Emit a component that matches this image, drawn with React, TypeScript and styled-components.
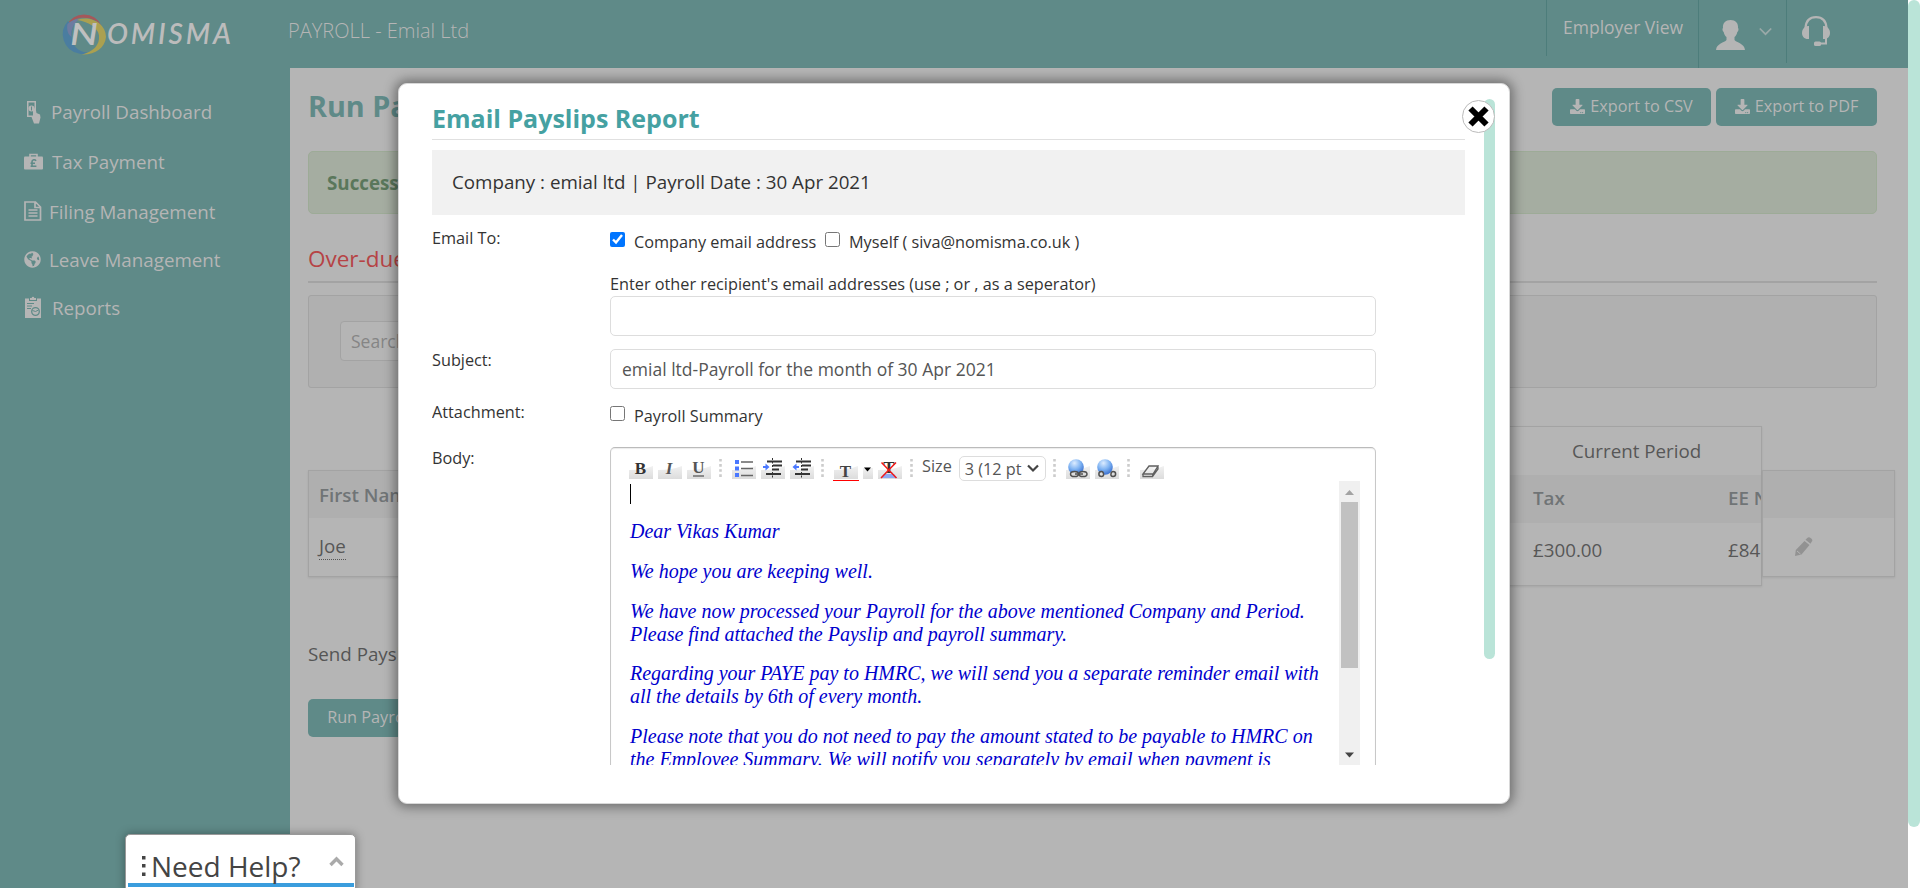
import React from "react";
import styled, { createGlobalStyle } from "styled-components";
import { FaDownload, FaGlobeAmericas } from "react-icons/fa";

const SANS = '"Open Sans", "Noto Sans", sans-serif';
const TEAL = "#5f8a88";
const DIM = "#b5b5b5";
const LINE = "#a3a3a3";

const Global = createGlobalStyle`
  * { box-sizing: border-box; }
  body { margin: 0; background: #fff; font-family: ${SANS}; overflow: hidden; }
  h1, h2, p { margin: 0; }
`;

const Page = styled.div`
  position: relative;
  width: 1920px;
  height: 888px;
  overflow: hidden;
  display: flex;
`;
const Screen = styled.div`
  width: 1908px;
  height: 888px;
  background: ${DIM};
  display: flex;
  flex-direction: column;
  overflow: hidden;
`;
const PageScroll = styled.div`
  width: 12px;
  height: 827px;
  border-radius: 6px;
  background: #bae4d8;
`;

const Header = styled.header`
  height: 68px;
  flex: none;
  background: ${TEAL};
  color: ${DIM};
  display: flex;
`;
const LogoBox = styled.div`
  width: 288px;
  padding: 6px 0 0 58px;
`;
const Product = styled.div`
  font-size: 20px;
  font-weight: 300;
  line-height: 27px;
  padding-top: 17px;
  flex: 1;
  white-space: nowrap;
`;
const HeaderCell = styled.div<{ w: number; h: number }>`
  width: ${(p) => p.w}px;
  height: ${(p) => p.h}px;
  border-left: 1px solid #4d7d7b;
  display: flex;
`;
const ViewName = styled.span`
  font-size: 17.5px;
  line-height: 24px;
  padding: 15px 0 0 16px;
  white-space: nowrap;
`;
const UserBox = styled.span`
  padding: 20px 0 0 17px;
  display: flex;
  gap: 14px;
`;
const HeadsetBox = styled.span`
  padding: 16px 0 0 15px;
`;

const Columns = styled.div`
  flex: 1;
  display: flex;
  min-height: 0;
`;
const Sidebar = styled.nav`
  width: 290px;
  flex: none;
  background: ${TEAL};
  padding-top: 19px;
`;
const NavItem = styled.a<{ gap: number; h: number }>`
  display: flex;
  align-items: center;
  height: ${(p) => p.h}px;
  padding-left: 24px;
  color: ${DIM};
  font-size: 18.75px;
  white-space: nowrap;
  svg { flex: none; margin-right: ${(p) => p.gap}px; }
`;

const Main = styled.main`
  flex: 1;
  padding-left: 18px;
  min-width: 0;
  color: #555;
`;
const Body = styled.div`
  width: 1569px;
`;
const TitleRow = styled.div`
  display: flex;
  height: 83px;
  padding-top: 20px;
  gap: 5px;
`;
const PageTitle = styled.h1`
  flex: 1;
  font-size: 28.75px;
  line-height: 36px;
  font-weight: 700;
  color: ${TEAL};
`;
const Button = styled.button<{ w: number }>`
  width: ${(p) => p.w}px;
  height: 38px;
  padding: 0 0 2px;
  border: 0;
  border-radius: 5px;
  background: ${TEAL};
  color: ${DIM};
  font: 400 16.25px ${SANS};
  display: flex;
  align-items: center;
  justify-content: center;
  gap: 5px;
  white-space: nowrap;
`;
const Alert = styled.div`
  height: 63px;
  border: 1px solid #9dab97;
  border-radius: 5px;
  background: #a5ada1;
  padding: 0 18px;
  line-height: 62px;
  font-size: 18.75px;
  font-weight: 700;
  color: #5a775b;
`;
const Overdue = styled.h2`
  height: 69px;
  border-bottom: 2px solid ${LINE};
  padding-top: 27px;
  font-size: 22.5px;
  line-height: 36px;
  font-weight: 400;
  color: #b64345;
`;
const SearchPanel = styled.div`
  margin-top: 12px;
  height: 93px;
  border: 1px solid ${LINE};
  border-radius: 3px;
  background: #b0b0b0;
  padding: 25px 31px;
`;
const SearchBox = styled.div`
  width: 300px;
  height: 40px;
  border: 1px solid ${LINE};
  border-radius: 4px;
  background: ${DIM};
  padding-left: 10px;
  line-height: 38px;
  font-size: 17.5px;
  color: #858585;
`;
const Tables = styled.div`
  margin-top: 38px;
  width: 1587px;
  display: flex;
  align-items: flex-start;
`;
const Table = styled.div<{ w: number; drop?: number }>`
  width: ${(p) => p.w}px;
  margin-top: ${(p) => p.drop || 0}px;
  border: 1px solid ${LINE};
  box-shadow: 0 1px 2px rgba(0, 0, 0, 0.08);
  overflow: hidden;
`;
const Row = styled.div<{ h: number; head?: boolean; pad: number; lift?: number }>`
  display: flex;
  align-items: center;
  height: ${(p) => p.h}px;
  padding-left: ${(p) => p.pad}px;
  padding-bottom: ${(p) => p.lift || 0}px;
  font-size: 18.75px;
  font-weight: ${(p) => (p.head ? 600 : 400)};
  color: ${(p) => (p.head ? "#707476" : "#575757")};
  background: ${(p) => (p.head ? "#afafaf" : "transparent")};
  white-space: nowrap;
`;
const Cell = styled.span<{ w?: number }>`
  flex: none;
  width: ${(p) => (p.w ? p.w + "px" : "auto")};
`;
const Editable = styled.span`
  border-bottom: 1px dotted #555;
  line-height: 26px;
  margin-top: -1px;
`;
const SendRow = styled.div`
  margin-top: 53px;
  font-size: 18.75px;
  line-height: 30px;
`;
const RunWrap = styled.div`
  margin-top: 30px;
`;

const Modal = styled.section`
  position: absolute;
  left: 398px;
  top: 83px;
  width: 1112px;
  height: 721px;
  border-radius: 9px;
  border: 1px solid #d8d8d8;
  background: #fff;
  box-shadow: 0 0 12px 3px rgba(0, 0, 0, 0.4);
  padding: 15px 14px 37px 33px;
  display: flex;
`;
const ModalBody = styled.div`
  width: 1033px;
  margin-right: 19px;
  height: 666px;
  overflow: hidden;
  color: #333;
`;
const ModalScroll = styled.div`
  width: 11px;
  height: 560px;
  border-radius: 6px;
  background: #bae4d8;
`;
const Close = styled.button`
  position: absolute;
  left: 1063px;
  top: 16px;
  width: 33px;
  height: 33px;
  padding: 0;
  border: 1.5px solid #bbb;
  border-radius: 50%;
  background: #fff;
  display: flex;
  align-items: center;
  justify-content: center;
`;
const ModalTitle = styled.h2`
  height: 41px;
  border-bottom: 1px solid #e0e0e0;
  font-size: 25px;
  line-height: 38px;
  font-weight: 700;
  color: #45a1a2;
`;
const Summary = styled.div`
  margin-top: 10px;
  height: 65px;
  background: #f1f1f1;
  padding-left: 20px;
  font-size: 18.75px;
  line-height: 64px;
`;
const Field = styled.div<{ top: number }>`
  display: flex;
  align-items: flex-start;
  padding-top: ${(p) => p.top}px;
  font-size: 16.25px;
  line-height: 22px;
`;
const Label = styled.span`
  width: 178px;
  flex: none;
`;
const Controls = styled.div`
  width: 766px;
`;
const Checks = styled.div<{ h: number }>`
  display: flex;
  height: ${(p) => p.h}px;
  white-space: nowrap;
`;
const CheckLabel = styled.label<{ w: number }>`
  display: flex;
  width: ${(p) => p.w}px;
  padding-top: 4px;
  gap: 9px;
  input { margin: 1px 0 0; width: 15px; height: 15px; }
`;
const Hint = styled.div`
  height: 23px;
  padding-top: 1px;
  margin-bottom: 1px;
`;
const Input = styled.div`
  height: 40px;
  border: 1px solid #ddd;
  border-radius: 5px;
  padding-left: 11px;
  font-size: 17.5px;
  line-height: 38px;
  color: #555;
`;
const Editor = styled.div`
  height: 400px;
  border: 1px solid #c8c8c8;
  border-top-color: #bbb;
  border-radius: 5px;
  box-shadow: inset 0 1px 1px rgba(0, 0, 0, 0.08);
  padding: 8px 15px 0 18px;
`;
const Toolbar = styled.div`
  height: 25px;
  display: flex;
  svg { overflow: visible; }
`;
const SizeLabel = styled.span`
  font-size: 16.25px;
  line-height: 21px;
  color: #555;
  margin-left: 2px;
`;
const SizeSelect = styled.span`
  width: 87px;
  height: 25px;
  margin: 0 4px 0 7px;
  border: 1px solid #ddd;
  border-radius: 5px;
  display: flex;
  align-items: center;
  justify-content: space-between;
  padding: 0 6px 0 5px;
  font-size: 16.25px;
  color: #555;
  white-space: nowrap;
`;
const SizeValue = styled.span`
  width: 57px;
  overflow: hidden;
`;
const Frame = styled.div`
  display: flex;
`;
const Letter = styled.div`
  position: relative;
  width: 711px;
  padding: 39.4px 0 0 1px;
  font: italic 20px/23px "Liberation Serif", "Times New Roman", serif;
  color: #0000cd;
  white-space: nowrap;
  p { margin-bottom: 16.67px; }
`;
const Caret = styled.i`
  position: absolute;
  left: 1px;
  top: 3px;
  width: 1px;
  height: 20px;
  background: #000;
`;
const FrameScroll = styled.div`
  width: 21px;
  height: 284px;
  background: #f0f0f0;
  display: flex;
  flex-direction: column;
  align-items: center;
  svg { display: block; }
`;
const FrameThumb = styled.div`
  width: 17px;
  height: 166px;
  background: #c1c1c1;
`;

const Help = styled.aside`
  position: absolute;
  left: 125px;
  top: 834px;
  width: 231px;
  height: 60px;
  border: 1px solid #999;
  border-radius: 5px;
  background: #fff;
  box-shadow: 0 0 10px rgba(0, 0, 0, 0.35);
  padding: 0 1px 0 2px;
`;
const HelpRow = styled.div`
  height: 48px;
  padding: 15px 10px 0 13px;
  display: flex;
  align-items: flex-start;
  white-space: nowrap;
`;
const HelpText = styled.span`
  font-size: 28px;
  line-height: 36px;
  font-weight: 400;
  color: #444;
  flex: 1;
  padding-left: 4px;
  margin-top: -2px;
`;
const HelpBar = styled.div`
  height: 4px;
  background: #3a9ddd;
`;

const Logo = () => (
  <svg width="180" height="52" viewBox="58 6 180 52">
    <path d="M66.500 26a19 19 0 0 1 35 0c-7-10-26-12-35 0z" fill="#a5585a" />
    <path d="M68 21a19.500 19.500 0 0 0 11 32.500c4 1 7 .4 10-1c-15 0-21-13-15-28c-2 0-5-1-6-3.500z" fill="#4a7da0" />
    <path d="M67.500 24c3-3 7-5 12-5c-6 4-9 11-8 18c-4-3-5-8-4-13z" fill="#6d7ba0" />
    <path d="M77 20c14-5 29 4 29 17c-1 11-11 18-24 17.500c11-3 18-9 17-19c-1-8-11-14-22-15.500z" fill="#aba050" />
    <text x="70" y="44.500" fontFamily="Lato" fontWeight="600" fontStyle="italic" fontSize="30" fill="#c0c0c0" textLength="28" lengthAdjust="spacingAndGlyphs">N</text>
    <text x="107" y="44" fontFamily="Lato" fontWeight="600" fontStyle="italic" fontSize="28" fill="#bcbcbc" textLength="124" lengthAdjust="spacing">OMISMA</text>
  </svg>
);

const PayIcon = () => (
  <svg width="18" height="24" viewBox="0 0 18 24" fill={DIM}>
    <path fillRule="evenodd" d="M3 1h9v9l-2 2v5H3zM4.500 2.500v13h4.500v-5l1.500-1.500v-6.500z" />
    <circle cx="7.500" cy="8.500" r="3" />
    <path d="M9 9l2.500-1 1 5 3.500 1.500.5 3-1.500 6h-5l-2.500-6.500 1.500-1z" />
    <path d="M7.500 6.500v4" stroke={TEAL} />
  </svg>
);
const CaseIcon = () => (
  <svg width="19" height="17" viewBox="0 0 19 17">
    <path d="M6 4V1.500h7V4" fill="none" stroke={DIM} strokeWidth="1.600" />
    <rect y="3.500" width="19" height="13" rx="1" fill={DIM} />
    <path d="M12 7.800c-1-1.600-4-1.300-4 1v4.400H6.600h5.800M6.500 10.300h4.500" fill="none" stroke={TEAL} strokeWidth="1.600" />
  </svg>
);
const FileIcon = () => (
  <svg width="18" height="20" viewBox="0 0 18 20" fill="none" stroke={DIM} strokeWidth="1.700">
    <path d="M1 1h10.500l5 5v13H1zM11 1v5.500h5.500M4.500 9h9M4.500 12h9M4.500 15h9" />
  </svg>
);
const ReportIcon = () => (
  <svg width="18" height="22" viewBox="0 0 18 22">
    <path d="M1 2.500h4V5h8V2.500h4V22H1zM6 2h1.700a1.300 1.300 0 0 1 2.600 0H12v2H6z" fill={DIM} />
    <path d="M3 7.500h7M3 10h5M3 12.500h4" stroke={TEAL} strokeWidth="1" />
    <circle cx="11.500" cy="15.500" r="3.800" fill="none" stroke={TEAL} strokeWidth="1.300" />
    <path d="M11.500 15.500l3-1.500M11.500 15.500l-3-1" stroke={TEAL} />
  </svg>
);
const UserIcon = () => (
  <svg width="29" height="30" viewBox="0 0 29 30" fill={DIM}>
    <path d="M14.500 0c5 0 8 3 7.500 8 1 .5.500 3.500-.7 4-.5 2.500-1.500 4-2.800 5v3c2 2.500 10 3.500 10.500 10H0c.5-6.500 8.500-7.500 10.500-10v-3c-1.300-1-2.300-2.500-2.800-5C6.500 11.500 6 8.500 7 8c-.5-5 2.500-8 7.500-8z" />
  </svg>
);
const HeadsetIcon = () => (
  <svg width="28" height="31" viewBox="0 0 28 31" fill={DIM}>
    <path d="M3.500 12C4 5 8 1.200 14 1.200S24 5 24.500 12" fill="none" stroke={DIM} strokeWidth="2.200" />
    <path d="M7 10v13H6c-8 0-8-12 0-13zM21 10v13h1c8 0 8-12 0-13z" />
    <path d="M24 21v6.500h-7" fill="none" stroke={DIM} strokeWidth="2" />
    <rect x="12" y="25.500" width="7" height="4.500" rx="1.500" />
  </svg>
);
const PencilIcon = () => (
  <svg width="18" height="19" viewBox="0 0 18 19" fill="#929292">
    <path d="M9.500 4l5 4L6.500 17.500 0 19l.8-6zM10.500 2.800l2-2q1.500-1.200 3.500.5t1 3L15.500 6.800z" />
    <path d="M2 14l3.500 3" stroke={DIM} />
  </svg>
);

const ToolIcons = () => (
  <svg width="291" height="24" viewBox="629 456 291 24">
    <defs>
      <linearGradient id="shade" x1="0" y1="0" x2="0" y2="1">
        <stop offset="0" stopColor="#f1f1f1" />
        <stop offset="1" stopColor="#dcdcdc" />
      </linearGradient>
    </defs>
    {[629, 658, 687, 732, 761, 790, 834, 878].map((x) => (
      <path key={x} d={`M${x} 470q14 0 24-4v13h-24z`} fill="url(#shade)" />
    ))}
    <rect x="863" y="468" width="10" height="11" fill="url(#shade)" />
    <g fontFamily="Liberation Serif" fontSize="17" fontWeight="700" fill="#333" textAnchor="middle">
      <text x="640.500" y="474">B</text>
      <text x="669" y="474" fontStyle="italic" fill="#555">I</text>
      <text x="698.500" y="473" fill="#555">U</text>
      <text x="845.500" y="476.500" fill="#444">T</text>
      <text x="889" y="473">T</text>
    </g>
    <path d="M693 476h11" stroke="#333" />
    <path d="M833 480.500h26" stroke="#f00" />
    <g fill="#4a78ff">
      <path d="M735 460h4v4h-4zM735 466.500h4v4h-4zM735 473h4v4h-4z" />
      <path d="M763 466h2.500v-2.500l4 3.500-4 3.500V468H763zM799 466h-2.500v-2.500l-4 3.500 4 3.500V468h2.500z" />
      <path d="M881 478l3-4h10l3 4z" fill="#8ea8f0" />
    </g>
    <path d="M741 462h12M741 468.500h12M741 475.500h12" stroke="#666" strokeWidth="1.400" />
    <path d="M767 461.500h15M773 465.500h9M773 469.500h6M766 474h15M796 461.500h15M802 465.500h9M802 469.500h6M795 474h15" stroke="#333" strokeWidth="2" />
    <path d="M772.500 458v20M801.500 458v20" stroke="#333" strokeDasharray="2 1.500" />
    <path d="M864 467.500h7l-3.500 4z" fill="#000" />
    <path d="M881.500 462.500l15 15.500M896 462.500l-15 15.500" stroke="#f01818" strokeWidth="1.500" />
    <path d="M720.500 459v18M822.500 459v18M911.500 459v18" stroke="#ccc" strokeWidth="2.600" strokeDasharray="2.600 2.500" />
  </svg>
);
const LinkIcons = () => (
  <svg width="120" height="24" viewBox="1049 456 120 24">
    <defs>
      <radialGradient id="globe" cx="0.4" cy="0.25" r="0.75">
        <stop offset="0" stopColor="#dcecff" />
        <stop offset="0.550" stopColor="#7db2f2" />
        <stop offset="1" stopColor="#3a70d0" />
      </radialGradient>
    </defs>
    <path d="M1053.500 459v18M1127.500 459v18" stroke="#ccc" strokeWidth="2.600" strokeDasharray="2.600 2.500" />
    {[1065, 1094, 1139].map((x) => (
      <path key={x} d={`M${x} 470q14 0 24-4v13h-24z`} fill="url(#shade)" />
    ))}
    <circle cx="1075" cy="467" r="7.800" fill="url(#globe)" />
    <circle cx="1104" cy="467" r="7.800" fill="url(#globe)" />
    <g fill="#ddd" stroke="#505050" strokeWidth="1.500">
      <ellipse cx="1073.500" cy="474" rx="4" ry="2.600" />
      <ellipse cx="1082" cy="474" rx="4" ry="2.600" />
      <path d="M1074 474h8" />
      <path d="M1100.500 471.500c-3.500 0-3.500 5 0 5s2-5 0-5zM1112 471.500c3.500 0 3.500 5 0 5s-2-5 0-5z" />
    </g>
    <path d="M1142 474l6-8h9l-5 8zM1142 474v2.500h9.500l5.500-7.500v-3M1151.700 474v2.500" fill="#eee" stroke="#606060" strokeWidth="1.300" />
  </svg>
);

const Dots = () => (
  <svg width="6" height="24" viewBox="0 0 6 24" fill="#444">
    <rect x="1" y="6" width="3.500" height="3.500" />
    <rect x="1" y="14" width="3.500" height="3.500" />
    <rect x="1" y="22.500" width="3.500" height="3.500" />
  </svg>
);
const DotsBox = styled.span`
  svg { overflow: visible; display: block; }
`;

export default function App() {
  return (
    <Page>
      <Global />
      <Screen>
        <Header>
          <LogoBox><Logo /></LogoBox>
          <Product>PAYROLL - Emial Ltd</Product>
          <HeaderCell w={152} h={56}><ViewName>Employer View</ViewName></HeaderCell>
          <HeaderCell w={88} h={68}>
            <UserBox>
              <UserIcon />
              <svg width="13" height="24" viewBox="0 0 13 24" fill="none" stroke="#9aa9a8" strokeWidth="1.700">
                <path d="M.8 8.500l5.700 5.700 5.700-5.700" />
              </svg>
            </UserBox>
          </HeaderCell>
          <HeaderCell w={122} h={63}><HeadsetBox><HeadsetIcon /></HeadsetBox></HeaderCell>
        </Header>
        <Columns>
          <Sidebar>
            <NavItem gap={9} h={49}><PayIcon />Payroll Dashboard</NavItem>
            <NavItem gap={9} h={51}><CaseIcon />Tax Payment</NavItem>
            <NavItem gap={7} h={48}><FileIcon />Filing Management</NavItem>
            <NavItem gap={8} h={48}><FaGlobeAmericas size={17} />Leave Management</NavItem>
            <NavItem gap={10} h={48}><ReportIcon />Reports</NavItem>
          </Sidebar>
          <Main>
            <Body>
              <TitleRow>
                <PageTitle>Run Payroll</PageTitle>
                <Button w={159}><FaDownload size={15} />Export to CSV</Button>
                <Button w={161}><FaDownload size={15} />Export to PDF</Button>
              </TitleRow>
              <Alert>Success!</Alert>
              <Overdue>Over-due</Overdue>
              <SearchPanel><SearchBox>Search</SearchBox></SearchPanel>
              <Tables>
                <Table w={600} drop={44}>
                  <Row h={47} head pad={10}>First Name</Row>
                  <Row h={58} pad={10}><Editable>Joe</Editable></Row>
                </Table>
                <Table w={854}>
                  <Row h={48} pad={663} lift={2}>Current Period</Row>
                  <Row h={48} head pad={624} lift={3}><Cell w={195}>Tax</Cell><Cell>EE NI</Cell></Row>
                  <Row h={62} pad={624} lift={9}><Cell w={195}>£300.00</Cell><Cell>£84.36</Cell></Row>
                </Table>
                <Table w={133} drop={44}>
                  <Row h={47} head pad={10} />
                  <Row h={58} pad={32} lift={2}><PencilIcon /></Row>
                </Table>
              </Tables>
              <SendRow>Send Payslips</SendRow>
              <RunWrap><Button w={124}>Run Payroll</Button></RunWrap>
            </Body>
          </Main>
        </Columns>
      </Screen>
      <PageScroll />

      <Modal>
        <ModalBody>
          <ModalTitle>Email Payslips Report</ModalTitle>
          <Summary>Company : emial ltd | Payroll Date : 30 Apr 2021</Summary>
          <Field top={12}>
            <Label>Email To:</Label>
            <Controls>
              <Checks h={45}>
                <CheckLabel w={215}><input type="checkbox" defaultChecked />Company email address</CheckLabel>
                <CheckLabel w={300}><input type="checkbox" />Myself ( siva@nomisma.co.uk )</CheckLabel>
              </Checks>
              <Hint>Enter other recipient's email addresses (use ; or , as a seperator)</Hint>
              <Input />
            </Controls>
          </Field>
          <Field top={13}>
            <Label>Subject:</Label>
            <Controls><Input>emial ltd-Payroll for the month of 30 Apr 2021</Input></Controls>
          </Field>
          <Field top={12}>
            <Label>Attachment:</Label>
            <Controls>
              <Checks h={34}>
                <CheckLabel w={300}><input type="checkbox" />Payroll Summary</CheckLabel>
              </Checks>
            </Controls>
          </Field>
          <Field top={12}>
            <Label>Body:</Label>
            <Controls>
              <Editor>
                <Toolbar>
                  <ToolIcons />
                  <SizeLabel>Size</SizeLabel>
                  <SizeSelect>
                    <SizeValue>3 (12 pt)</SizeValue>
                    <svg width="12" height="9" viewBox="0 0 12 9" fill="none" stroke="#444" strokeWidth="2.200"><path d="M1 1.500l5 5 5-5" /></svg>
                  </SizeSelect>
                  <LinkIcons />
                </Toolbar>
                <Frame>
                  <Letter>
                    <Caret />
                    <p>Dear Vikas Kumar</p>
                    <p>We hope you are keeping well.</p>
                    <p>We have now processed your Payroll for the above mentioned Company and Period.<br />Please find attached the Payslip and payroll summary.</p>
                    <p>Regarding your PAYE pay to HMRC, we will send you a separate reminder email with<br />all the details by 6th of every month.</p>
                    <p>Please note that you do not need to pay the amount stated to be payable to HMRC on<br />the Employee Summary. We will notify you separately by email when payment is</p>
                  </Letter>
                  <FrameScroll>
                    <svg width="21" height="21"><path d="M6 14h9l-4.500-5z" fill="#a3a3a3" /></svg>
                    <FrameThumb />
                    <svg width="21" height="97"><path d="M6 84.500h9l-4.500 5z" fill="#444" /></svg>
                  </FrameScroll>
                </Frame>
              </Editor>
            </Controls>
          </Field>
        </ModalBody>
        <ModalScroll />
        <Close>
          <svg width="21" height="21" viewBox="0 0 21 21" stroke="#000" strokeWidth="6"><path d="M2.500 2.500l16 16M18.500 2.500l-16 16" /></svg>
        </Close>
      </Modal>

      <Help>
        <HelpRow>
          <DotsBox><Dots /></DotsBox>
          <HelpText>Need Help?</HelpText>
          <svg width="15" height="20" viewBox="0 0 15 20" fill="none" stroke="#aaa" strokeWidth="3.400"><path d="M1.500 15l6-6 6 6" /></svg>
        </HelpRow>
        <HelpBar />
      </Help>
    </Page>
  );
}
